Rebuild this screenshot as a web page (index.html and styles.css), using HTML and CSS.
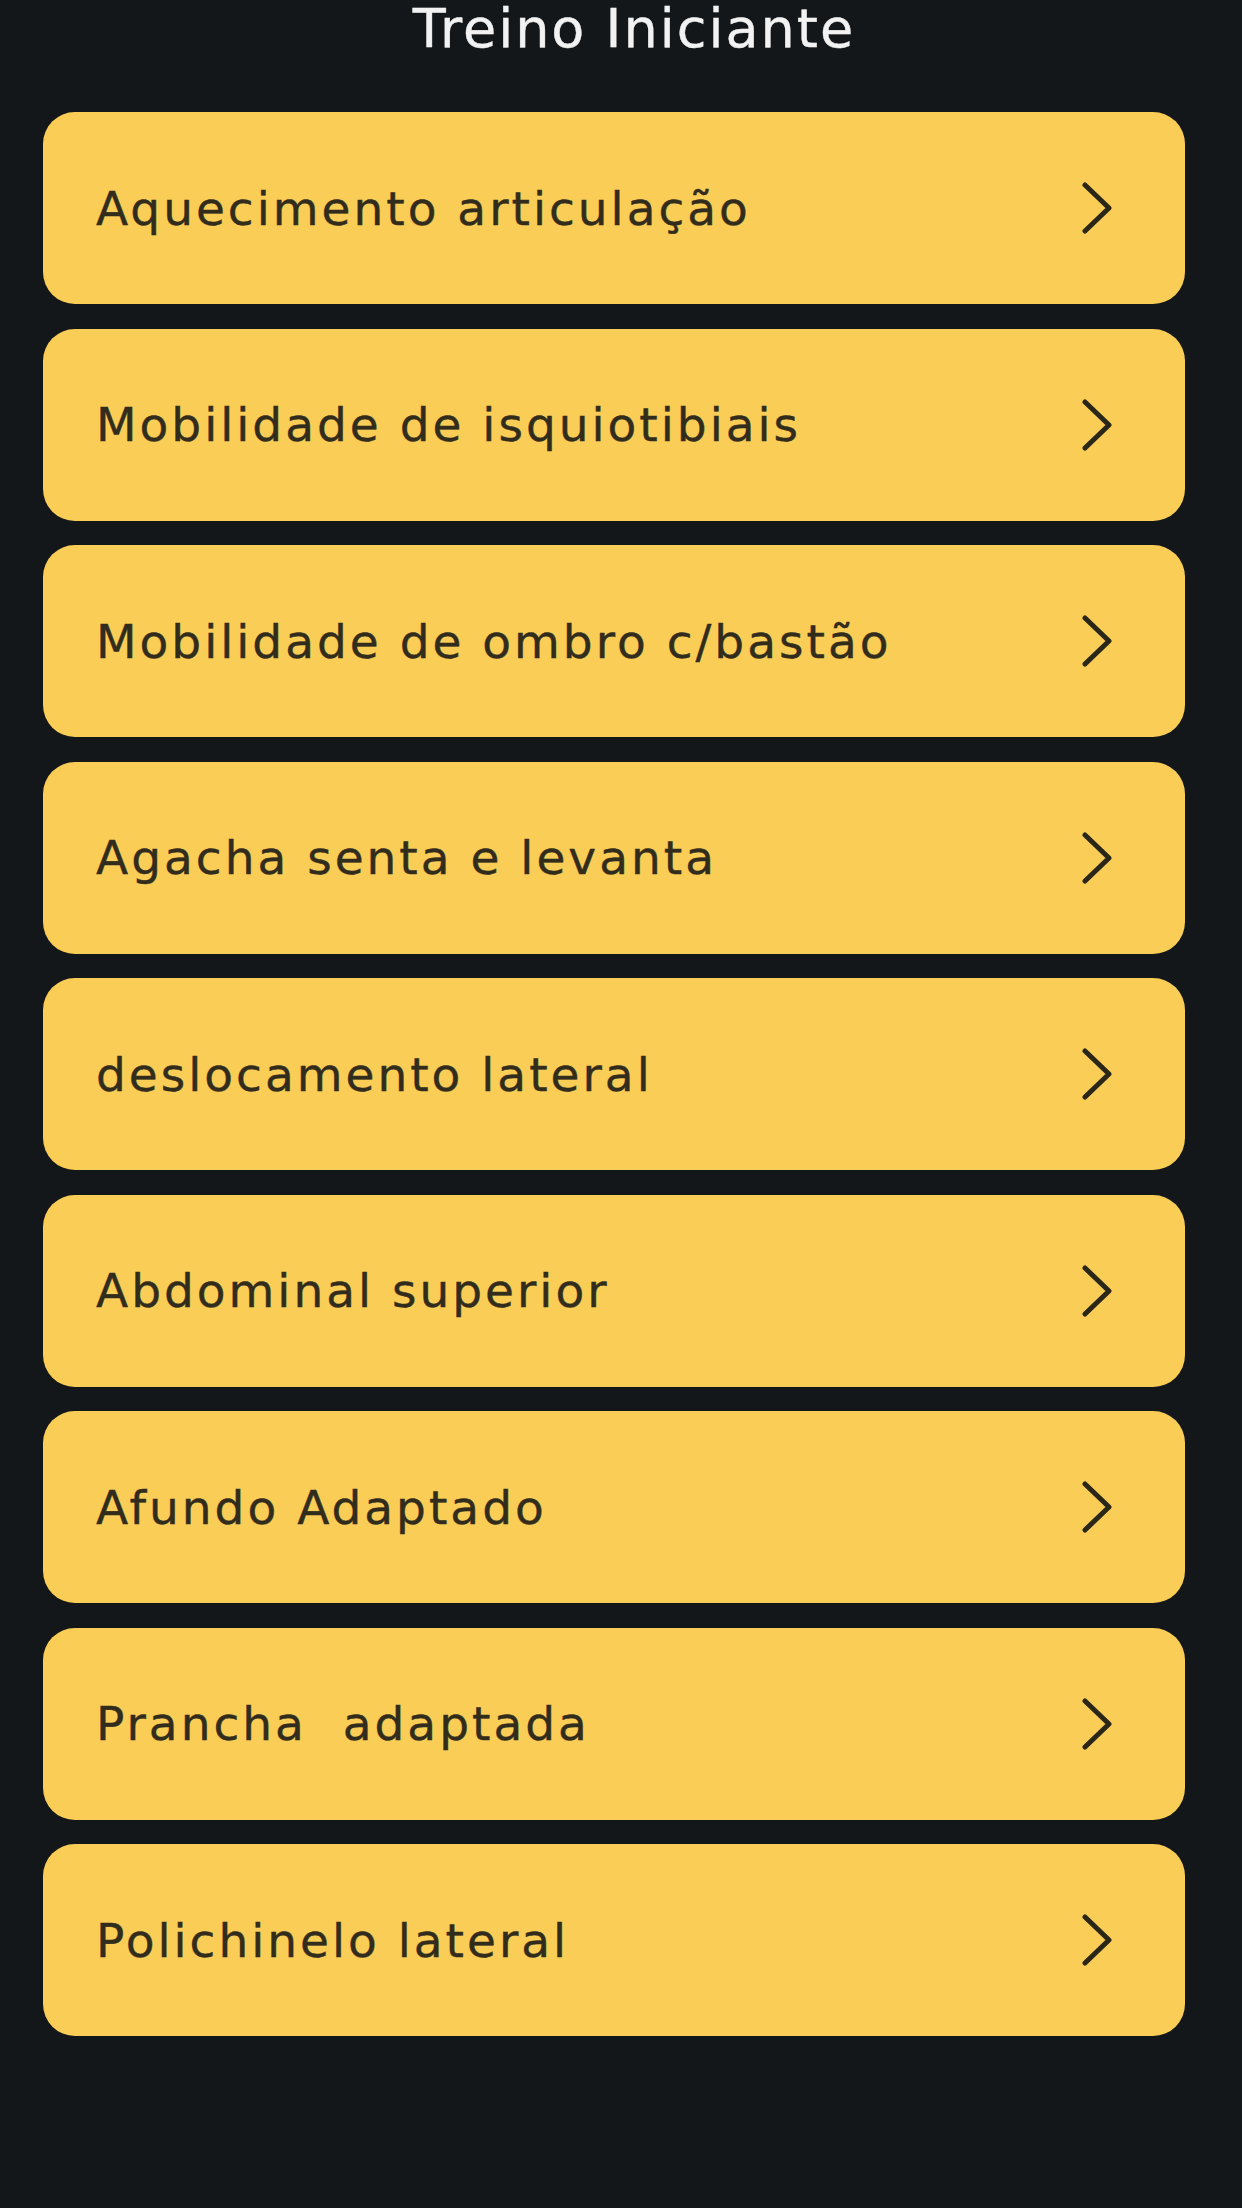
FILE: index.html
```html
<!DOCTYPE html>
<html>
<head>
  <meta charset="utf-8">
  <title>Treino Iniciante</title>
  <link rel="stylesheet" href="styles.css">
</head>
<body>
  <header class="top">
    <h1 class="title">Treino Iniciante</h1>
  </header>
  <main>
    <ul class="list">
      <li class="item"><span>Aquecimento articulação</span><svg class="chev" viewBox="0 0 32 52"><polyline points="4,3 28,26 4,49"/></svg></li>
      <li class="item"><span>Mobilidade de isquiotibiais</span><svg class="chev" viewBox="0 0 32 52"><polyline points="4,3 28,26 4,49"/></svg></li>
      <li class="item"><span>Mobilidade de ombro c/bastão</span><svg class="chev" viewBox="0 0 32 52"><polyline points="4,3 28,26 4,49"/></svg></li>
      <li class="item"><span>Agacha senta e levanta</span><svg class="chev" viewBox="0 0 32 52"><polyline points="4,3 28,26 4,49"/></svg></li>
      <li class="item"><span>deslocamento lateral</span><svg class="chev" viewBox="0 0 32 52"><polyline points="4,3 28,26 4,49"/></svg></li>
      <li class="item"><span>Abdominal superior</span><svg class="chev" viewBox="0 0 32 52"><polyline points="4,3 28,26 4,49"/></svg></li>
      <li class="item"><span>Afundo Adaptado</span><svg class="chev" viewBox="0 0 32 52"><polyline points="4,3 28,26 4,49"/></svg></li>
      <li class="item"><span>Prancha&nbsp; adaptada</span><svg class="chev" viewBox="0 0 32 52"><polyline points="4,3 28,26 4,49"/></svg></li>
      <li class="item"><span>Polichinelo lateral</span><svg class="chev" viewBox="0 0 32 52"><polyline points="4,3 28,26 4,49"/></svg></li>
    </ul>
  </main>
</body>
</html>
```

FILE: styles.css
```css
* { box-sizing: border-box; }

html, body { margin: 0; padding: 0; }

body {
  background: #14171a;
  min-height: 100vh;
  font-family: "DejaVu Sans", "Liberation Sans", sans-serif;
}

.top { height: 112px; padding-top: 2px; }

.title {
  margin: 0;
  padding-left: 26px;
  font-size: 54px;
  line-height: 54px;
  font-weight: normal;
  letter-spacing: 2px;
  color: #f2f2f2;
  -webkit-text-stroke: 0.4px #f2f2f2;
  text-align: center;
}

.list {
  list-style: none;
  margin: 0;
  padding: 0 57px 0 43px;
  display: flex;
  flex-direction: column;
  gap: 24.5px;
}

.item {
  height: 192px;
  background: #f9cd56;
  border-radius: 32px;
  display: flex;
  align-items: center;
  justify-content: space-between;
  padding: 0 72px 0 53px;
  font-size: 47px;
  letter-spacing: 3px;
  color: #322c1c;
  -webkit-text-stroke: 0.4px #322c1c;
  white-space: pre;
}

.chev {
  width: 32px;
  height: 52px;
  fill: none;
  stroke: #2a2618;
  stroke-width: 5;
  stroke-linecap: round;
  stroke-linejoin: round;
}
```
